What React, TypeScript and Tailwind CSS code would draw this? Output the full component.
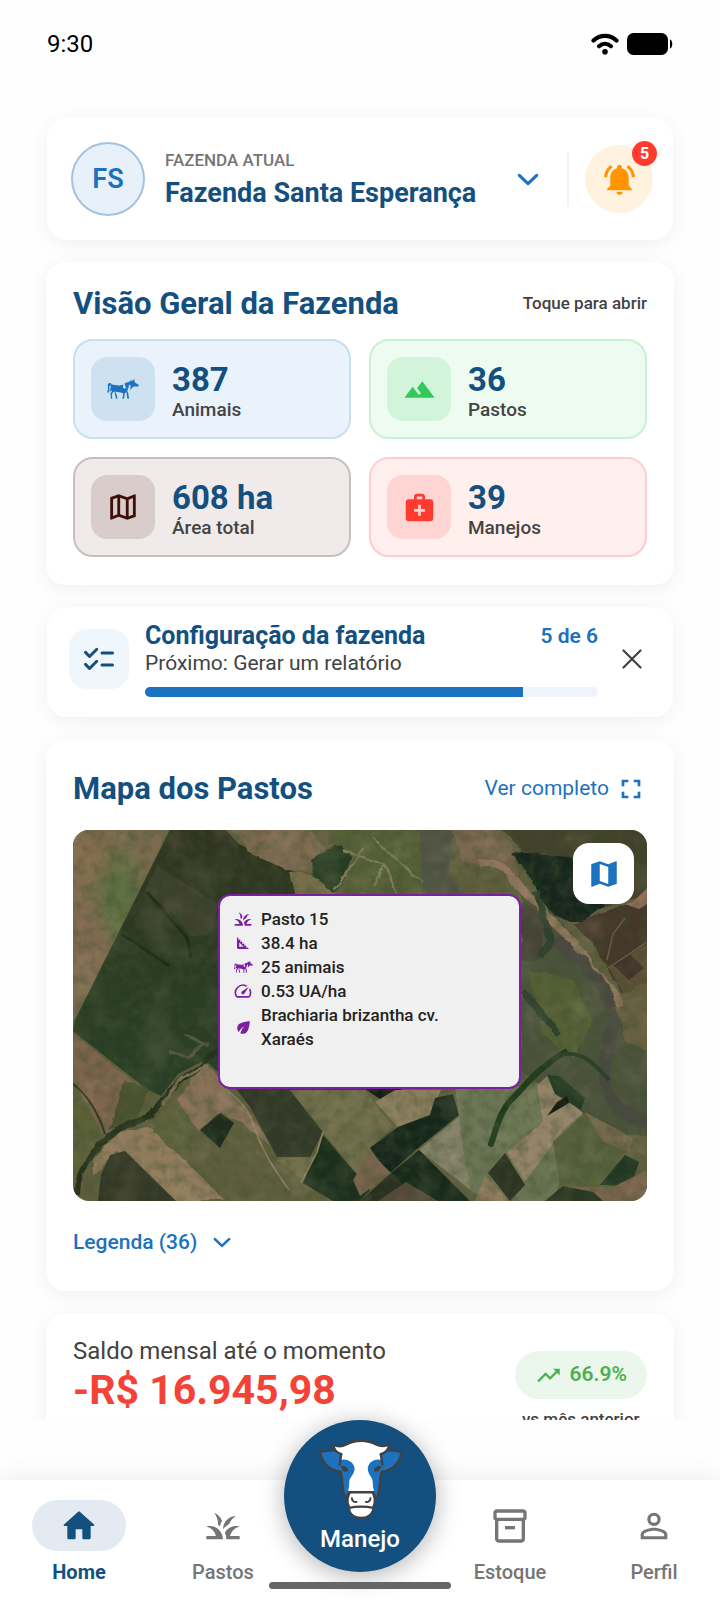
import type { ReactNode } from "react";
import {
  MdEco,
  MdFullscreen,
  MdGrass,
  MdLandscape,
  MdMap,
  MdMedicalServices,
  MdNotificationsActive,
  MdOutlineInventory2,
  MdOutlineMap,
  MdPersonOutline,
  MdSpeed,
  MdSquareFoot,
  MdTrendingUp,
} from "react-icons/md";

const CARD = "rounded-[20px] bg-white shadow-[0_4px_20px_rgba(0,0,0,0.06)]";

const ChevronIcon = ({ className }: { className?: string }) => (
  <svg
    viewBox="0 0 24 14"
    className={className}
    fill="none"
    stroke="currentColor"
    strokeWidth="3.4"
    strokeLinecap="round"
    strokeLinejoin="round"
    aria-hidden="true"
  >
    <path d="M2.5 2.5 12 11.5l9.5-9" />
  </svg>
);

const CloseIcon = () => (
  <svg viewBox="0 0 20 20" className="size-5" stroke="currentColor" strokeWidth="2.2" strokeLinecap="round" aria-hidden="true">
    <path d="M1.5 1.5l17 17M18.500 1.5l-17 17" />
  </svg>
);

const ChecklistIcon = () => (
  <svg
    viewBox="0 0 24 24"
    className="size-9"
    fill="none"
    stroke="currentColor"
    strokeWidth="2"
    strokeLinecap="round"
    strokeLinejoin="round"
    aria-hidden="true"
  >
    <path d="M14 8h7M14 16h7M3 7.600l2.700 2.700L10.500 5.500M3 15.600l2.700 2.700 4.800-4.800" />
  </svg>
);

const HomeIcon = () => (
  <svg viewBox="0 0 24 24" className="size-10" fill="currentColor" aria-hidden="true">
    <path d="M10 19v-5h4v5c0 .55.45 1 1 1h3c.55 0 1-.45 1-1v-7h1.700c.46 0 .68-.57.33-.87L12.670 3.600c-.38-.34-.96-.34-1.340 0l-8.360 7.530c-.34.3-.13.87.33.87H5v7c0 .55.45 1 1 1h3c.55 0 1-.45 1-1z" />
  </svg>
);

const WifiIcon = () => (
  <svg viewBox="0 0 28 22" className="h-[22px] w-7" fill="none" stroke="black" strokeLinecap="round" aria-hidden="true">
    <path d="M2.500 7.500c6.500-6.300 16.500-6.300 23 0" strokeWidth="4.200" />
    <path d="M8 13.200c3.600-3.200 8.400-3.200 12 0" strokeWidth="4.200" />
    <circle cx="14" cy="18.800" r="2.800" fill="black" stroke="none" />
  </svg>
);

const BatteryIcon = () => (
  <svg viewBox="0 0 46 24" className="h-6 w-[46px]" aria-hidden="true">
    <rect x="0" y="1" width="41" height="22" rx="6.500" />
    <path d="M43 7.500c3 .8 3 8.200 0 9z" />
  </svg>
);

// 소 전신 아이콘
const CowIcon = ({ className }: { className?: string }) => (
  <svg viewBox="0 0 32 20" className={className} fill="currentColor" aria-hidden="true">
    <path d="M4.500 4.800C2.200 3 .2 4.800.9 8.200c.4 2-.1 3.200-.6 4.600-.3.900.6 1.300 1.200.7.900-1.300 1-3 .8-4.600-.2-1.900.4-2.700 1.700-2.100z" />
    <path d="M4 5.400c2.800-.2 4.800 1 8 1 2.300 0 3.200-1 4.400-1l-.5 2.200c-.3 1.600 1.300 2.400 2.600 1.600 1.300-.9 1.400-2.700 3.400-3.200.3 1.900-.6 2.900-1.100 4.400-.6 1.700-1 2.800-1.800 3.600l-1.700-.7-1.700.9c-2.600-1.200-4.200-.9-6.900-1.500-1.700-.1-2.400.2-3.300 1.200l-1-2.400-1.900 1.700C3.600 10.500 3.400 8.500 4 5.400z" />
    <path d="M17.500 4.600c2-1.700 4.100-1.500 6.200-2.100L22.500.9c1 .5 2 .8 3.100.8L27.200 0l.3 2c-.1 1.100.8 1.700 2 2.400l2.300 1.500c.2.900-.4 1.700-1.400 1.700-1.600.1-2.800-.5-4.100.1-1.300.7-1.900 2.300-3.300 3.300.5-1.700.8-3.700.3-5.300-1.600.1-2.700 1.300-3.500 2.300-.7.700-1.500.3-1.300-.6z" />
    <path d="M4 13.200l1.900.2-.9 1.800.2 4.500H3.900l-.2-4.200c-.5-.8-.4-1.600.3-2.300zM7.600 13.200l1.500.2c-.4 1 .1 1.500.6 2.400l.8 3.900H9.100l-1-3.400zM16.200 12.900l1.900.2-.5 2.300-.6 4.300h-1.600l.7-4.200zM19.700 12.700l1.300-.3.500 3.500.5 3.800h-1.600l-.7-3.800z" />
  </svg>
);

const CowHead = () => (
  <svg viewBox="54 56 256 246" className="h-[82px] w-[85px]" strokeLinecap="round" strokeLinejoin="round" aria-hidden="true">
    <g fill="#1d72be">
      <path d="M122 102C104 94 82 94 61 98C62 126 84 153 120 156Z" />
      <path d="M246 102C264 94 284 94 305 98C304 126 282 153 248 156Z" />
    </g>
    <path
      d="M100 75C112 82 126 82 139 75C165 60 203 60 229 75C242 82 254 82 268 75C266 92 252 100 243 103L246 122L240 160L232 215H136L126 160L120 122L124 103C112 100 101 92 100 75Z"
      fill="white"
      stroke="none"
    />
    <g fill="#1d72be">
      <path d="M119 122C142 115 165 130 164 150C163 168 147 174 148 192C148 208 144 221 136 232C129 205 130 180 120 154Z" />
      <path d="M247 122C224 115 203 130 204 150C205 168 220 174 219 192C219 208 224 221 231 232C238 205 237 180 247 154Z" />
    </g>
    <g fill="none" stroke="#414042" strokeWidth="7">
      <path d="M124 104C110 99 101 92 100 75C112 82 126 82 139 75C165 60 203 60 229 75C242 82 254 82 268 75C267 92 257 100 243 104" />
      <path d="M96 93C83 92 72 94 61 99C63 126 88 154 122 157C130 180 124 208 136 234" />
      <path d="M272 93C285 92 294 94 305 99C303 126 280 154 246 157C238 180 244 208 232 234" />
      <path d="M124 104L119 136M243 104L248 136" />
    </g>
    <g fill="#414042">
      <path d="M123 141C132 138 144 143 145 154C138 161 127 157 123 141Z" />
      <path d="M244 141C235 138 223 143 222 154C229 161 240 157 244 141Z" />
    </g>
    <path d="M151 219H217C226 226 228 250 221 262C222 285 205 296 184 296C163 296 147 285 147 262C140 250 142 226 151 219Z" fill="white" stroke="#414042" strokeWidth="7" />
    <g fill="none" stroke="#414042" strokeWidth="6">
      <path d="M147 266C170 261 198 261 221 266" strokeWidth="7" />
      <path d="M156 237C157 245 163 250 170 248M212 237C211 245 205 250 198 248" />
    </g>
    <path d="M144 270L152 284M224 270L216 284" stroke="#14507f" strokeWidth="5" />
  </svg>
);

// 목장 위성 지도
const SatelliteMap = () => (
  <svg viewBox="0 0 574 371" preserveAspectRatio="xMidYMid slice" className="absolute inset-0 size-full" role="img" aria-label="Mapa dos pastos">
    <defs>
      <filter id="grain" x="0" y="0" width="100%" height="100%">
        <feTurbulence type="fractalNoise" baseFrequency="0.09" numOctaves="5" seed="7" />
        <feColorMatrix values="0 0 0 0 0.05  0 0 0 0 0.08  0 0 0 0 0.03  0 1.9 0 0 -0.75" />
      </filter>
      <filter id="light" x="0" y="0" width="100%" height="100%">
        <feTurbulence type="fractalNoise" baseFrequency="0.03" numOctaves="4" seed="21" />
        <feColorMatrix values="0 0 0 0 0.62  0 0 0 0 0.47  0 0 0 0 0.33  1.8 0 0 0 -0.82" />
      </filter>
      <filter id="rough" x="-5%" y="-5%" width="110%" height="110%">
        <feTurbulence type="fractalNoise" baseFrequency="0.06" numOctaves="3" seed="3" />
        <feDisplacementMap in="SourceGraphic" scale="7" xChannelSelector="R" yChannelSelector="G" />
      </filter>
      <filter id="blur">
        <feGaussianBlur stdDeviation="9" />
      </filter>
      <linearGradient id="forest" x1="0" y1="0" x2="0" y2="1">
        <stop offset="0" stopColor="#313420" />
        <stop offset="0.6" stopColor="#2a3d24" />
        <stop offset="1" stopColor="#283f26" />
      </linearGradient>
      <clipPath id="leftField">
        <path d="M0 0H96L2 190L0 196Z" />
      </clipPath>
    </defs>
    <rect width="574" height="371" fill="#5f5f3d" />

    <path d="M0 0H96L2 190L0 196Z" fill="#7b6b4e" />
    <g clipPath="url(#leftField)">
      <g filter="url(#blur)">
        <ellipse cx="46" cy="65" rx="22" ry="46" fill="#5f7042" />
        <ellipse cx="14" cy="28" rx="22" ry="26" fill="#866e50" />
        <ellipse cx="14" cy="110" rx="16" ry="34" fill="#866b52" />
      </g>
    </g>
    <path d="M97 0H153L166 14L190 26L222 42L222 58L245 64H300V260H164L132 230L105 244L88 266L72 258L0 201L2 190Z" fill="url(#forest)" />
    <path d="M84 36L145 74L139 104L118 106L98 82L72 60Z" fill="#3c402d" />
    <path d="M48 104C70 118 84 128 96 136M74 62L114 108L118 128" fill="none" stroke="#1f2b1a" strokeWidth="3" />

    <g filter="url(#rough)">
      <path d="M153 -8H226L252 18L238 42L215 40L180 25Z" fill="#7d6a51" />
      <path d="M216 42L240 44L268 68H222Z" fill="#746e49" />
      <path d="M239 28L262 14L280 20L272 48L262 64L240 45Z" fill="#263d22" />
      <path d="M245 -8H360V66H268L282 30Z" fill="#546139" />
      <path d="M345 -8H385L372 40L392 66H350Z" fill="#525545" />
      <path d="M376 -8L420 -8L442 22L446 52L424 38L390 32Z" fill="#75634d" />
      <path d="M420 -8H590V60L530 78L505 30L450 22Z" fill="#42422c" />
      <path d="M440 22L498 26L532 76L510 92L478 86Z" fill="#15251b" />
      <path d="M448 62L470 72L520 130L548 190L590 215V310L530 300L448 240Z" fill="#4b523a" />
      <path d="M448 70L472 88L468 130L448 130Z" fill="#474434" />
      <path d="M456 140L500 150L520 190L500 230L470 205Z" fill="#546036" />
      <path d="M500 94L590 62V160L548 162L520 110Z" fill="#44392b" />
      <path d="M545 168L590 140V230L552 210Z" fill="#676141" />
      <path d="M270 20L310 34L300 58M310 34L324 62M262 60L290 20M300 8L350 52" fill="none" stroke="#7f8058" strokeWidth="2" />
      <path d="M405 32C440 32 440 55 462 72C486 100 502 112 516 134C528 150 542 158 548 178" fill="none" stroke="#8f765b" strokeWidth="8" />
      <path d="M482 110C504 126 540 158 540 190C534 225 524 250 540 270C550 284 560 290 590 296" fill="none" stroke="#484a41" strokeWidth="12" />
      <path d="M462 60L478 110L466 128M450 160L485 205" fill="none" stroke="#2d402e" strokeWidth="7" />
    </g>
    <path d="M560 72L574 58V74L566 79L552 74Z" fill="#966f59" />
    <path d="M536 138L574 114V156L552 166Z" fill="#6d6040" opacity=".6" />
    <path d="M538 133L550 118L571 138L556 150Z" fill="#43342a" />
    <path d="M532 140L574 112M534 130L540 104L552 88" fill="none" stroke="#6c5c46" strokeWidth="1.500" />

    <path d="M0 203L45 240L75 262L60 290L30 305L0 262Z" fill="#7d644c" />
    <path d="M0 250L30 305L4 350L0 350Z" fill="#5d6138" />
    <g filter="url(#rough)">
      <path d="M52 250L75 260L64 290L36 300Z" fill="#48522f" />
      <path d="M44 300L78 298L132 350L150 371H96L44 322L20 345V330Z" fill="#907b5b" />
      <path d="M75 295L105 270L125 300L108 325Z" fill="#5e643e" />
      <path d="M105 268L132 230L150 255L178 285L200 320L168 292L148 282L126 302Z" fill="#897258" />
      <path d="M204 330L240 325L254 340L232 352Z" fill="#706d48" />
      <path d="M4 365C4 335 26 308 56 294C86 288 92 262 108 250C128 238 132 228 150 218" fill="none" stroke="#28311f" strokeWidth="6" />
      <path d="M90 275L104 252L132 234" fill="none" stroke="#7e7559" strokeWidth="3" />
      <path d="M95 220L116 228L130 212M112 206L136 216" fill="none" stroke="#56593f" strokeWidth="3" />
    </g>
    <path d="M37 325L52 321L103 371H25L28 345Z" fill="#343826" />
    <path d="M127 300L147 283L161 293L147 318Z" fill="#1f2c1d" />
    <path d="M164 260H217L250 302L237 327H204L177 277Z" fill="#323927" />
    <path d="M217 260H292L320 297L297 317L310 343L297 360L250 302Z" fill="#6f6d4a" />
    <path d="M250 305L297 360L287 371H260L230 353Z" fill="#1b2f1c" />
    <path d="M287 371L318 343L345 371Z" fill="#2a2f20" />
    <path d="M290 258H330L312 272Z" fill="#121d15" />
    <path d="M302 272L322 260H368L357 285L325 297Z" fill="#8b7e5d" />
    <path d="M297 318L325 297L357 285L362 268L380 264L386 285L345 318L316 344Z" fill="#14261a" />
    <path d="M382 256H450L480 250L510 285L480 371H412L346 320L386 287Z" fill="#6a7555" />
    <path d="M386 287L346 320L398 360L390 318Z" fill="#7f7f65" />
    <path d="M346 320L318 343L345 371H397Z" fill="#172a1a" />
    <path d="M333 352L365 371H305Z" fill="#534939" />
    <path d="M297 322L318 343L287 366L280 350Z" fill="#7a654e" />
    <path d="M434 322L452 352L490 300L510 283L494 270L475 245L464 256L470 292Z" fill="#958568" />
    <path d="M434 322L470 290L462 256L420 300Z" fill="#6e7856" />
    <path d="M432 323L415 343L437 371L452 355Z" fill="#2d3422" />
    <path d="M412 346L436 371H402Z" fill="#907c5c" />
    <path d="M480 312L512 283L560 308L545 330L535 355H487Z" fill="#56613b" />
    <path d="M512 282L560 308L556 322L530 312Z" fill="#756a4a" />
    <path d="M527 355L552 325L566 332L558 356Z" fill="#203722" />
    <path d="M486 357H540L574 340V371H520Z" fill="#7b654e" />
    <path d="M472 371L490 356L520 362L530 371Z" fill="#2a3722" />
    <path d="M474 245L486 246L512 268L508 280L482 264Z" fill="#263c25" />
    <path d="M474 286L484 272L494 266L496 273Z" fill="#141c14" />
    <path d="M492 222C465 238 452 256 438 270C428 280 424 296 418 314" fill="none" stroke="#1f3b1d" strokeWidth="6" strokeLinecap="round" />
    <path d="M490 224C510 222 520 232 536 250" fill="none" stroke="#2c4028" strokeWidth="4" />
    <path d="M148 255C166 270 178 280 182 300C192 326 202 340 216 360M250 302L244 322L228 353" fill="none" stroke="#8c8361" strokeWidth="1.800" />
    <path d="M0 254C14 264 26 284 32 304" fill="none" stroke="#2c2f1e" strokeWidth="2" />

    <rect width="574" height="371" filter="url(#light)" opacity=".22" />
    <rect width="574" height="371" filter="url(#grain)" opacity=".5" />
  </svg>
);

interface StatTileProps {
  icon: ReactNode;
  value: string;
  label: string;
  tileClass: string;
  iconClass: string;
}

/**
 * @param {StatTileProps} props 통계 타일 정보
 * @returns 농장 요약 타일 버튼
 */
const StatTile = ({ icon, value, label, tileClass, iconClass }: StatTileProps) => {
  return (
    <button type="button" className={`flex items-center gap-[17px] rounded-[20px] border-2 px-4 py-[15px] text-left ${tileClass}`}>
      <span className={`flex size-16 items-center justify-center rounded-2xl ${iconClass}`}>{icon}</span>
      <span className="flex flex-col pt-1.5">
        <span className="text-[33px] leading-9 font-bold text-[#14507f]">{value}</span>
        <span className="text-[19px] leading-6 font-medium text-[#444]">{label}</span>
      </span>
    </button>
  );
};

const stats: StatTileProps[] = [
  {
    icon: <CowIcon className="h-5 w-8" />,
    value: "387",
    label: "Animais",
    tileClass: "border-[#c8dff0] bg-[#eaf3fb]",
    iconClass: "bg-[#cde1f1] text-[#1c72be]",
  },
  {
    icon: <MdLandscape size={33} />,
    value: "36",
    label: "Pastos",
    tileClass: "border-[#c9f2d3] bg-[#edfbf1]",
    iconClass: "bg-[#d2f4da] text-[#34c759]",
  },
  {
    icon: <MdOutlineMap size={34} />,
    value: "608 ha",
    label: "Área total",
    tileClass: "border-[#c6bfbe] bg-[#f0ebea]",
    iconClass: "bg-[#d8cdcb] text-[#3e0f06]",
  },
  {
    icon: <MdMedicalServices size={33} />,
    value: "39",
    label: "Manejos",
    tileClass: "border-[#ffcdd0] bg-[#ffefed]",
    iconClass: "bg-[#ffd5d3] text-[#ff3b30]",
  },
];

const pastureInfo = [
  { icon: <MdGrass size={20} />, text: "Pasto 15" },
  { icon: <MdSquareFoot size={18} />, text: "38.4 ha" },
  { icon: <CowIcon className="h-3 w-[19px]" />, text: "25 animais" },
  { icon: <MdSpeed size={20} />, text: "0.53 UA/ha" },
  { icon: <MdEco size={19} />, text: "Brachiaria brizantha cv. Xaraés" },
];

interface NavItemProps {
  icon: ReactNode;
  label: string;
  active?: boolean;
}

const NavItem = ({ icon, label, active }: NavItemProps) => {
  return (
    <a
      href="#"
      aria-current={active ? "page" : undefined}
      className={`flex flex-col items-center gap-2 text-[20px] leading-[26px] ${active ? "font-bold text-[#14507f]" : "font-medium text-[#757575]"}`}
    >
      <span className={`flex h-[51px] w-[94px] items-center justify-center rounded-full ${active ? "bg-[#e4eaf2]" : ""}`}>{icon}</span>
      {label}
    </a>
  );
};

const App = () => {
  const done = 5;
  const total = 6;

  return (
    <div className="flex h-screen flex-col bg-[#fefefe] font-[Roboto,sans-serif] text-[#424242]">
      <header className="flex h-[86px] shrink-0 items-center justify-between px-[47px] pt-0.5 text-[24px] text-black">
        <span>9:30</span>
        <span className="flex items-center gap-2">
          <WifiIcon />
          <BatteryIcon />
        </span>
      </header>

      <main className="flex min-h-0 flex-1 flex-col gap-[22px] overflow-y-auto px-[46px] pt-8 [scrollbar-width:none] *:shrink-0">
        {/* 현재 농장 */}
        <section className={`mx-px flex items-center py-6 pr-5 pl-6 ${CARD}`}>
          <span className="flex size-[74px] shrink-0 items-center justify-center rounded-full border-2 border-[#a3c2e0] bg-[#e8f1fa] text-[27px] font-semibold text-[#1c72be]">
            FS
          </span>
          <button type="button" className="ml-5 flex flex-1 items-center justify-between pr-7 text-left">
            <span className="flex flex-col gap-[3px]">
              <span className="text-[17px] leading-6 font-medium text-[#757575]">FAZENDA ATUAL</span>
              <span className="text-[27px] leading-9 font-bold text-[#14507f]">Fazenda Santa Esperança</span>
            </span>
            <ChevronIcon className="h-[13px] w-[22px] text-[#1c72be]" />
          </button>
          <span className="h-[54px] w-0.5 bg-[#f3f3f3]" />
          <button
            type="button"
            aria-label="Notificações"
            className="relative ml-4 flex size-[68px] items-center justify-center rounded-full bg-[#fff3e0] text-[#ff9500]"
          >
            <MdNotificationsActive size={37} />
            <span className="absolute -top-1 -right-1 flex size-[25px] items-center justify-center rounded-full bg-[#ff3b30] text-[16px] font-bold text-white">
              5
            </span>
          </button>
        </section>

        {/* 농장 개요 */}
        <section className={`px-[27px] pt-[22px] pb-[28px] ${CARD}`}>
          <div className="flex items-center justify-between">
            <h2 className="text-[31px] leading-10 font-bold text-[#14507f]">Visão Geral da Fazenda</h2>
            <span className="text-[17px] font-medium">Toque para abrir</span>
          </div>
          <div className="mt-[15px] grid grid-cols-2 gap-[18px]">
            {stats.map((stat) => (
              <StatTile key={stat.label} {...stat} />
            ))}
          </div>
        </section>

        {/* 농장 설정 진행 상황 */}
        <section className={`mx-px flex items-center pt-[14px] pr-[31px] pb-5 pl-[22px] ${CARD}`}>
          <span className="flex size-[60px] shrink-0 items-center justify-center rounded-[18px] bg-[#eff6fc] text-[#14507f]">
            <ChecklistIcon />
          </span>
          <div className="ml-4 flex-1">
            <div className="flex items-center justify-between">
              <h2 className="text-[25px] leading-[30px] font-bold text-[#14507f]">Configuração da fazenda</h2>
              <span className="text-[21px] leading-[30px] font-semibold text-[#1c72be]">
                {done} de {total}
              </span>
            </div>
            <p className="text-[21px] leading-6">Próximo: Gerar um relatório</p>
            <div className="mt-3 h-[10px] overflow-hidden rounded-full bg-[#eff4fa]">
              <div className="h-full bg-[#1c72be]" style={{ width: `${(done / total) * 100}%` }} />
            </div>
          </div>
          <button type="button" aria-label="Fechar" className="ml-6">
            <CloseIcon />
          </button>
        </section>

        {/* 목초지 지도 */}
        <section className={`px-[27px] pt-[30px] pb-[37px] ${CARD}`}>
          <div className="flex items-center justify-between">
            <h2 className="text-[31px] leading-10 font-bold text-[#14507f]">Mapa dos Pastos</h2>
            <a href="#" className="flex items-center gap-1.5 text-[21px] text-[#1c72be]">
              Ver completo <MdFullscreen size={32} />
            </a>
          </div>
          <div className="relative mt-[21px] h-[371px] overflow-hidden rounded-2xl">
            <SatelliteMap />
            <button
              type="button"
              aria-label="Tipo de mapa"
              className="absolute top-[13px] right-[13px] flex size-[61px] items-center justify-center rounded-2xl bg-white text-[#1c72be]"
            >
              <MdMap size={34} />
            </button>
            <ul className="absolute top-16 left-[145px] h-[195px] w-[303px] rounded-xl border-2 border-[#7b1fa2] bg-[#f4f4f5]/98 py-[11px] pr-14 pl-[13px] text-[17px] leading-6 font-medium text-[#222]">
              {pastureInfo.map(({ icon, text }) => (
                <li key={text} className="flex items-center gap-2">
                  <span className="flex w-5 shrink-0 justify-center text-[#7b1fa2]">{icon}</span>
                  {text}
                </li>
              ))}
            </ul>
          </div>
          <button type="button" className="mt-[29px] flex items-center gap-4 text-[21px] leading-6 font-medium text-[#1c72be]">
            Legenda (36) <ChevronIcon className="h-[11px] w-[18px]" />
          </button>
        </section>

        {/* 월 잔액 */}
        <section className={`flex justify-between px-[27px] pt-[22px] pb-6 ${CARD}`}>
          <div>
            <p className="text-[24px] leading-8">Saldo mensal até o momento</p>
            <p className="text-[41px] leading-[46px] font-bold text-[#f44336]">-R$ 16.945,98</p>
            <p className="mt-3.5 text-[19px] leading-6">Excluindo</p>
          </div>
          <div className="flex flex-col items-center pt-4">
            <span className="flex h-12 items-center gap-2 rounded-full bg-[#ebf7ec] px-5 text-[21px] font-semibold text-[#4caf50]">
              <MdTrendingUp size={27} />
              66.9%
            </span>
            <span className="mt-2 text-[17px] leading-6 font-medium">vs mês anterior</span>
          </div>
        </section>
      </main>

      <div className="relative shrink-0 pt-[60px]">
        <nav className="grid h-[126px] grid-cols-[158fr_130fr_144fr_156fr_132fr] bg-white pt-5 shadow-[0_-4px_24px_rgba(0,0,0,0.06)]">
          <NavItem icon={<HomeIcon />} label="Home" active />
          <NavItem icon={<MdGrass size={40} />} label="Pastos" />
          <span />
          <NavItem icon={<MdOutlineInventory2 size={40} />} label="Estoque" />
          <NavItem icon={<MdPersonOutline size={40} />} label="Perfil" />
        </nav>
        <button
          type="button"
          className="absolute top-0 left-1/2 flex size-[152px] -translate-x-1/2 flex-col items-center gap-[3px] rounded-full bg-[#14507f] pt-[18px] text-[24px] leading-8 font-medium text-white shadow-[0_4px_24px_rgba(0,0,0,0.3)]"
        >
          <CowHead />
          Manejo
        </button>
        <span className="absolute bottom-[17px] left-1/2 h-[7px] w-[182px] -translate-x-1/2 rounded-full bg-[#666]" />
      </div>
    </div>
  );
};

export default App;
